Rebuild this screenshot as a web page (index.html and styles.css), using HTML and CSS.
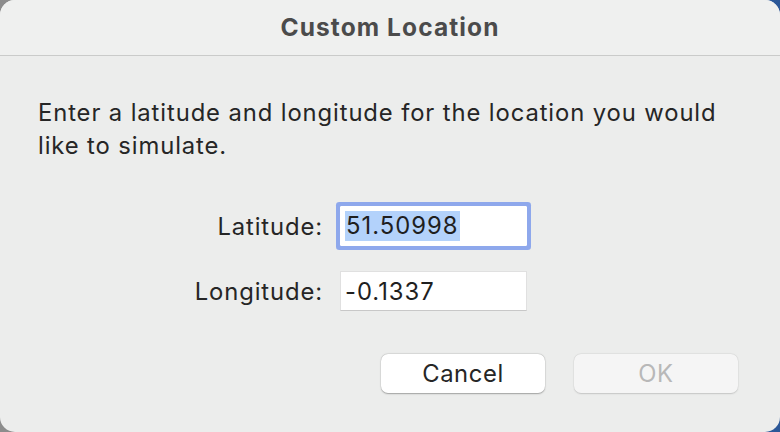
FILE: index.html
```html
<!DOCTYPE html>
<html>
<head>
<meta charset="utf-8">
<link rel="stylesheet" href="styles.css">
</head>
<body>
<div class="window">
  <div class="titlebar">Custom Location</div>
  <div class="content">
    <p class="message">Enter a latitude and longitude for the location you would like to simulate.</p>
    <div class="form">
      <label class="label">Latitude:</label>
      <div class="field focused"><span class="selected">51.50998</span></div>
      <label class="label">Longitude:</label>
      <div class="field">-0.1337</div>
    </div>
    <div class="buttons">
      <button class="btn">Cancel</button>
      <button class="btn disabled">OK</button>
    </div>
  </div>
</div>
</body>
</html>
```

FILE: styles.css
```css
html, body {
  margin: 0;
  padding: 0;
}
body {
  width: 780px;
  height: 432px;
  background: linear-gradient(to right, #8c8c8c 0%, #9a9a9a 40%, #3b74bd 80%, #2b5797 100%);
  font-family: "Inter", "Noto Sans", sans-serif;
  overflow: hidden;
}
.window {
  width: 780px;
  height: 432px;
  border-radius: 15px;
  background: #ecedec;
  overflow: hidden;
  display: flex;
  flex-direction: column;
}
.titlebar {
  height: 56px;
  box-sizing: border-box;
  border-bottom: 1px solid #cacbca;
  background: #eff0ef;
  display: flex;
  align-items: center;
  justify-content: center;
  font-weight: 700;
  font-size: 24.5px;
  color: #4b4b4b;
  letter-spacing: 1.1px;
  padding-bottom: 1px;
}
.content {
  padding: 40px 38px 0 38px;
  display: flex;
  flex-direction: column;
}
.message {
  margin: 0;
  font-size: 23.8px;
  line-height: 33px;
  letter-spacing: 0.9px;
  color: #262626;
  width: 690px;
}
.form {
  display: grid;
  grid-template-columns: 285px 187px;
  column-gap: 17px;
  row-gap: 25px;
  margin-top: 44px;
  align-items: center;
}
.label {
  text-align: right;
  font-size: 23.8px;
  letter-spacing: 0.9px;
  color: #262626;
}
.field {
  height: 40px;
  box-sizing: border-box;
  background: #ffffff;
  border: 1px solid #e0e0e0;
  border-bottom-color: #c8c8c8;
  font-size: 23.8px;
  letter-spacing: 1px;
  color: #1f1f1f;
  display: flex;
  align-items: center;
  padding-left: 4px;
}
.field.focused {
  border: 1px solid #ffffff;
  box-shadow: 0 0 0 4px #8ea8ec;
  border-radius: 1px;
}
.selected {
  background: #b3d2fb;
  padding: 1px 2px 1px 1px;
  line-height: 28px;
}
.buttons {
  display: flex;
  justify-content: flex-end;
  gap: 29px;
  margin-top: 43px;
  padding-right: 4px;
}
.btn {
  width: 164px;
  height: 39px;
  border: none;
  border-radius: 7px;
  background: #ffffff;
  box-shadow: 0 0.5px 1.5px rgba(0,0,0,0.3), 0 0 0 0.5px rgba(0,0,0,0.06);
  font-family: "Inter", "Noto Sans", sans-serif;
  font-size: 23.8px;
  letter-spacing: 0.6px;
  color: #262626;
  padding: 0;
}
.btn.disabled {
  background: #f5f5f5;
  color: #b8b8b8;
  box-shadow: 0 0.5px 1.5px rgba(0,0,0,0.15), 0 0 0 0.5px rgba(0,0,0,0.04);
}
```
